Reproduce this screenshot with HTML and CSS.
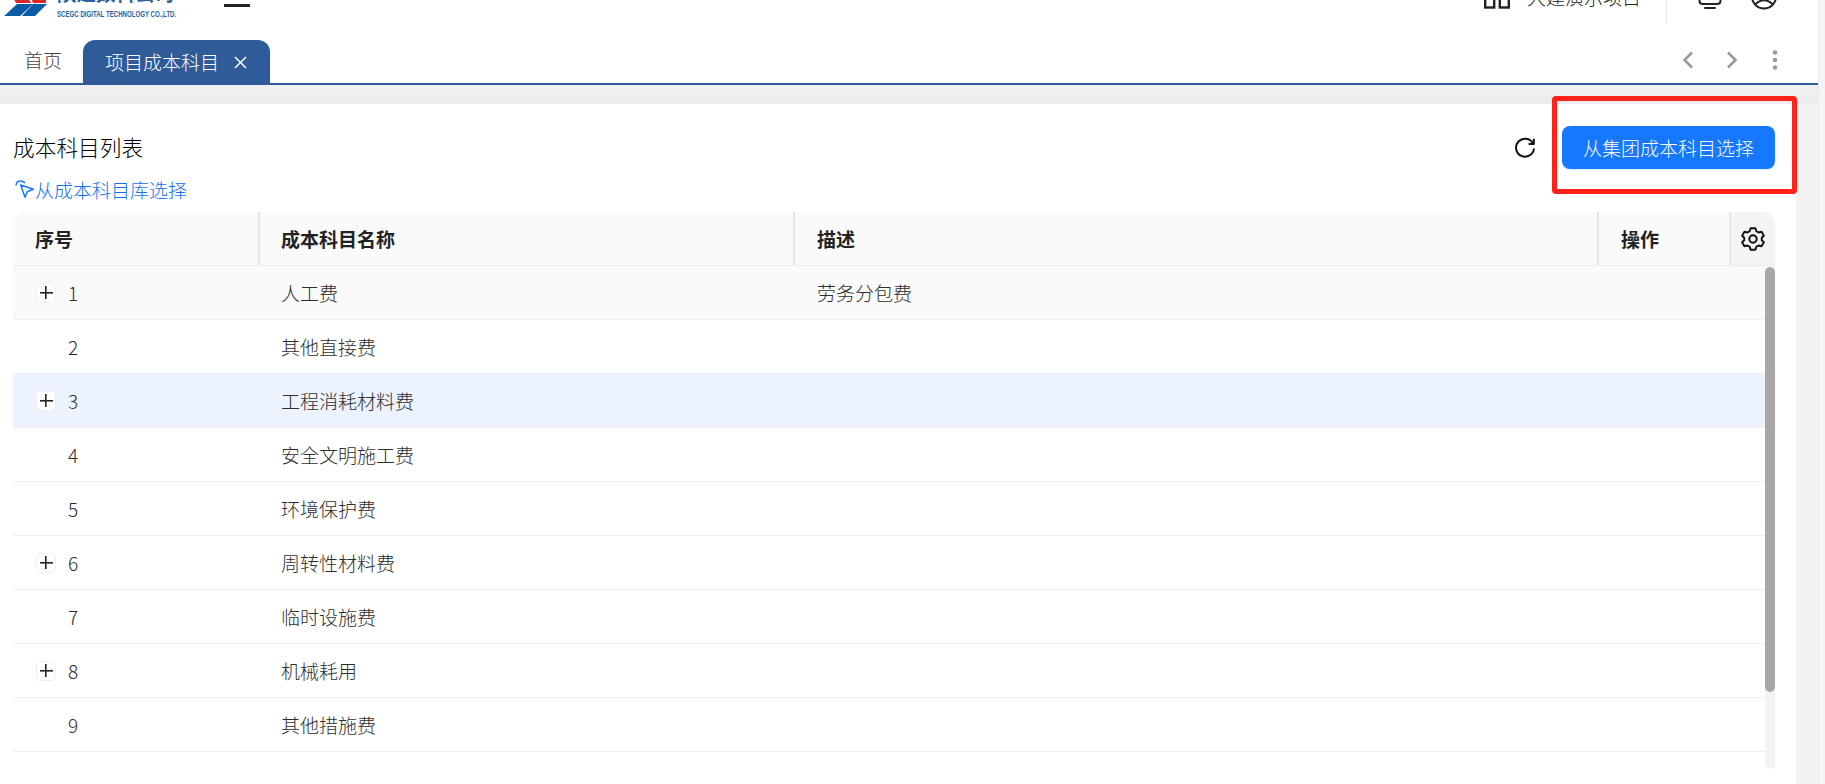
FILE: index.html
```html
<!DOCTYPE html>
<html lang="zh-CN">
<head>
<meta charset="utf-8">
<title>项目成本科目</title>
<link rel="stylesheet" href="styles.css">
</head>
<body>
<div class="app">
  <div class="main">
    <header class="header">
      <div class="header-inner">
        <div class="logo">
          <svg class="logo-mark" width="48" height="40" viewBox="0 0 48 40"><g transform="translate(0,24)"><path d="M2 18H18L33 4H17Z" fill="#0b5aa5"/><path d="M20 18H33L47 4H33Z" fill="#0b5aa5"/><path d="M12-4H27L31 3H16Z" fill="#e0262b"/><path d="M30-4H46V3H33Z" fill="#e0262b"/></g></svg>
          <div class="logo-text">
            <div class="logo-cn">陕建数科公司</div>
            <div class="logo-en">SCEGC DIGITAL TECHNOLOGY CO.,LTD.</div>
          </div>
        </div>
        <div class="burger"></div>
        <div class="spacer"></div>
        <svg class="grid-icon" width="26" height="40" viewBox="0 0 26 40" fill="none" stroke="#222" stroke-width="2.4"><rect x="1.2" y="22" width="9" height="9.5"/><rect x="15.8" y="22" width="9" height="9.5"/></svg>
        <div class="project">大建演示项目</div>
        <div class="divider"></div>
        <svg class="bell" width="24" height="40" viewBox="0 0 24 40" fill="none" stroke="#222" stroke-width="2"><path d="M1.5 20V25Q1.5 28 5 28H19Q22.5 28 22.5 25V20"/><path d="M7 32H17" stroke-linecap="round"/></svg>
        <svg class="avatar" width="26" height="40" viewBox="0 0 26 40" fill="none" stroke="#222" stroke-width="2"><circle cx="13" cy="20.5" r="12"/><path d="M4 28.5Q13 20 22 28.5"/></svg>
      </div>
    </header>
    <nav class="tabs">
      <div class="tab">首页</div>
      <div class="tab tab-active"><span>项目成本科目</span><svg class="tab-close" width="13" height="13" viewBox="0 0 13 13" stroke="#fff" stroke-width="1.5"><path d="M1 1 12 12M12 1 1 12"/></svg></div>
      <div class="spacer"></div>
      <svg class="nav-icon nav-left" width="12" height="18" viewBox="0 0 12 18" fill="none" stroke="#999" stroke-width="2.6"><path d="M10 1.5 2.5 9 10 16.5"/></svg>
      <svg class="nav-icon nav-right" width="12" height="18" viewBox="0 0 12 18" fill="none" stroke="#999" stroke-width="2.6"><path d="M2 1.5 9.5 9 2 16.5"/></svg>
      <svg class="nav-icon nav-more" width="6" height="20" viewBox="0 0 6 20" fill="#999"><circle cx="3" cy="2.5" r="2.2"/><circle cx="3" cy="10" r="2.2"/><circle cx="3" cy="17.5" r="2.2"/></svg>
    </nav>
    <div class="content">
      <section class="card">
        <div class="toolbar">
          <h2 class="title">成本科目列表</h2>
          <svg class="refresh" width="24" height="24" viewBox="0 0 24 24" fill="none" stroke="#111" stroke-width="2"><path d="M20 7.5A9 9 0 1 0 21 12.5"/><path d="M20.8 2.8V8H15.6" stroke-linejoin="round"/></svg>
          <button class="primary-btn">从集团成本科目选择</button>
        </div>
        <a class="link">
          <svg class="link-icon" width="19" height="19" viewBox="0 0 19 19" fill="none" stroke="#1677ff" stroke-width="1.5" stroke-linejoin="round"><path d="M5.7 5 18.3 9.3 12.3 11.7 10 17.3Z"/><path d="M1 5.5Q1.5 1 5 1 8 .8 10 3"/></svg>
          <span>从成本科目库选择</span>
        </a>
        <div class="table">
          <div class="row head">
            <div class="cell">序号</div>
            <div class="cell">成本科目名称</div>
            <div class="cell">描述</div>
            <div class="cell">操作</div>
            <div class="cell gear-cell">
              <svg width="26" height="26" viewBox="0 0 24 24" fill="none" stroke="#111" stroke-width="1.9" stroke-linejoin="round"><circle cx="12" cy="12" r="3.4"/><path d="M9.6 2.6h4.8l.9 2.9 2.2 1.2 3-.7 2.3 4-2.1 2 0 2.4 2.1 2-2.3 4-3-.7-2.2 1.2-.9 2.9H9.6l-.9-2.9-2.2-1.2-3 .7-2.3-4 2.1-2 0-2.4-2.1-2 2.3-4 3 .7 2.2-1.2Z" transform="translate(12 12) scale(.93) translate(-12 -13.2)"/></svg>
            </div>
          </div>
          <div class="body">
            <div class="row row-first"><div class="cell no"><span class="exp"></span><span>1</span></div><div class="cell">人工费</div><div class="cell">劳务分包费</div><div class="cell"></div><div class="cell"></div></div>
            <div class="row"><div class="cell no"><span class="exp-none"></span><span>2</span></div><div class="cell">其他直接费</div><div class="cell"></div><div class="cell"></div><div class="cell"></div></div>
            <div class="row row-selected"><div class="cell no"><span class="exp"></span><span>3</span></div><div class="cell">工程消耗材料费</div><div class="cell"></div><div class="cell"></div><div class="cell"></div></div>
            <div class="row"><div class="cell no"><span class="exp-none"></span><span>4</span></div><div class="cell">安全文明施工费</div><div class="cell"></div><div class="cell"></div><div class="cell"></div></div>
            <div class="row"><div class="cell no"><span class="exp-none"></span><span>5</span></div><div class="cell">环境保护费</div><div class="cell"></div><div class="cell"></div><div class="cell"></div></div>
            <div class="row"><div class="cell no"><span class="exp"></span><span>6</span></div><div class="cell">周转性材料费</div><div class="cell"></div><div class="cell"></div><div class="cell"></div></div>
            <div class="row"><div class="cell no"><span class="exp-none"></span><span>7</span></div><div class="cell">临时设施费</div><div class="cell"></div><div class="cell"></div><div class="cell"></div></div>
            <div class="row"><div class="cell no"><span class="exp"></span><span>8</span></div><div class="cell">机械耗用</div><div class="cell"></div><div class="cell"></div><div class="cell"></div></div>
            <div class="row"><div class="cell no"><span class="exp-none"></span><span>9</span></div><div class="cell">其他措施费</div><div class="cell"></div><div class="cell"></div><div class="cell"></div></div>
            <div class="row"><div class="cell no"><span class="exp"></span></div><div class="cell"></div><div class="cell"></div><div class="cell"></div><div class="cell"></div></div>
            <div class="scroll-track"><div class="scroll-thumb"></div></div>
          </div>
        </div>
      </section>
    </div>
    <div class="annotation"></div>
  </div>
  <div class="page-strip"></div>
</div>
</body>
</html>
```

FILE: styles.css
```css
* { box-sizing: border-box; }
html, body { margin: 0; height: 100%; overflow: hidden; }
body { font-family: "Noto Sans CJK SC", "Noto Sans", sans-serif; font-size: 19px; font-weight: 300; color: #333; background: #fff; }
.app { display: flex; height: 784px; }
.main { position: relative; width: 1818px; display: flex; flex-direction: column; }
.page-strip { flex: 1; background: #f5f5f5; border-left: 1px solid #e8e8e8; }
.spacer { flex: 1; }

.header { height: 40px; overflow: hidden; background: #fff; flex: none; }
.header-inner { height: 40px; margin-top: -24px; display: flex; align-items: center; }
.logo { display: flex; align-items: center; width: 224px; height: 40px; }
.logo-mark { flex: none; }
.logo-text { margin-left: 9px; margin-top: 16px; width: 120px; }
.logo-cn { font-size: 19.5px; font-weight: 700; line-height: 24px; color: #2b5f9e; margin-top: -8px; white-space: nowrap; }
.logo-en { font-family: "Liberation Sans", sans-serif; font-size: 8.6px; font-weight: 700; line-height: 9px; color: #2b5f9e; white-space: nowrap; margin-top: 5px; transform: scaleX(.71); transform-origin: left center; }
.burger { width: 26px; height: 2.5px; background: #222; align-self: flex-start; margin-top: 28px; }
.grid-icon { flex: none; }
.project { margin-left: 17px; width: 139px; white-space: nowrap; color: #222; }
.divider { width: 1px; height: 40px; background: #e6e6e6; margin-top: 16px; }
.bell { margin-left: 31px; }
.avatar { margin-left: 29px; margin-right: 41px; }

.tabs { height: 45px; flex: none; display: flex; align-items: stretch; background: #fff; border-bottom: 2px solid #2f5b99; }
.tab { width: 83px; padding-left: 24px; line-height: 40px; color: #444; }
.tab-active { width: 187px; height: 43px; padding-left: 22px; display: flex; align-items: center; color: #fff; background: #2f5b99; border-radius: 12px 12px 0 0; line-height: 1; }
.tab-close { margin-left: 15px; margin-top: 1px; flex: none; }
.nav-icon { flex: none; align-self: center; margin-bottom: 4px; }
.nav-right { margin-left: 32px; }
.nav-more { margin-left: 34px; margin-right: 40px; }

.content { flex: 1; min-height: 0; padding: 19px 22px 0 0; background: linear-gradient(#f0f0f0, #ececec 19px, #f2f2f2 19px); }
.card { height: 100%; background: #fff; padding: 0 21px 0 13px; display: flex; flex-direction: column; }
.toolbar { display: flex; align-items: center; padding-top: 22px; height: 65px; flex: none; }
.title { margin: -2px 0 0; flex: 1; font-size: 21.7px; font-weight: 300; color: #000; line-height: 43px; }
.refresh { margin-right: 25px; flex: none; }
.primary-btn { width: 213px; height: 43px; border: 0; border-radius: 8px; background: #1677ff; color: #fff; font: inherit; padding: 0; box-shadow: 0 2px 0 rgba(5, 145, 255, .1); }
.link { display: flex; align-items: center; height: 28px; margin-top: 6px; margin-bottom: 1px; color: #1270f0; flex: none; }
.link-icon { margin-left: 2px; margin-right: 1px; flex: none; }
.table { margin-top: 8px; height: 557px; overflow: hidden; border-radius: 12px 12px 0 0; display: flex; flex-direction: column; }
.row { display: grid; grid-template-columns: 247px 535px 804px 132px 44px; height: 54px; border-bottom: 1px solid #eeeeee; flex: none; }
.cell { display: flex; align-items: center; padding-left: 22px; color: #2e2e2e; min-width: 0; }
.cell:nth-child(2) { padding-left: 21px; }
.head { background: #fafafa; border-bottom: 1px solid #ebebeb; }
.head .cell { font-weight: 700; color: #222; border-right: 2px solid #e6e6e6; }
.head .gear-cell { background: #f3f4f6; border-right: 0; padding: 0 0 0 9px; }
.body { position: relative; flex: 1; overflow: hidden; }
.cell.no { gap: 12px; padding-left: 23px; }
.exp { width: 20px; height: 20px; border: 1px solid #f0f0f0; border-radius: 5px; background: linear-gradient(#222, #222) center / 13px 1.6px no-repeat, linear-gradient(#222, #222) center / 1.6px 13px no-repeat, #fff; flex: none; }
.exp-none { width: 20px; flex: none; }
.row-first { background: #fafafa; }
.row-selected { background: #ecf2fe; }
.scroll-track { position: absolute; top: 1px; right: 0; bottom: 0; width: 10px; background: #f3f3f3; border-radius: 5px; }
.scroll-thumb { height: 425px; background: #a8a6a7; border-radius: 5px; }

.annotation { position: absolute; left: 1552px; top: 96px; width: 245px; height: 98px; border: 5px solid #ff2218; border-radius: 4px; pointer-events: none; }
```
